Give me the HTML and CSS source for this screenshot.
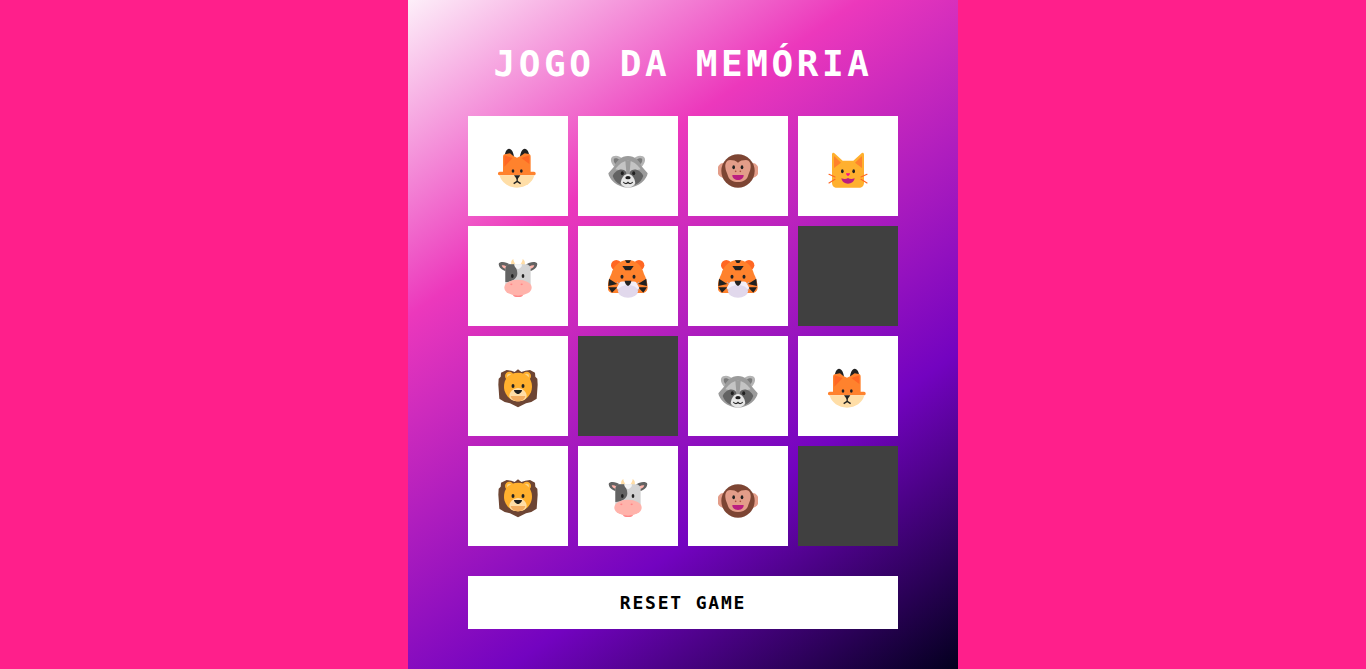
FILE: index.html
```html
<!DOCTYPE html>
<html lang="pt">
<head>
<meta charset="utf-8">
<title>Jogo da Memória</title>
<link rel="stylesheet" href="styles.css">
</head>
<body>
<svg class="defs" xmlns="http://www.w3.org/2000/svg">
  <symbol id="fox" viewBox="0 0 120 120">
    <path fill="#212121" d="M19 32C20 12 26 2 33 2 41 2 47 12 49 32ZM65 32C67 12 73 2 80 2 88 2 94 12 95 32Z"/>
    <path fill="#ff822d" d="M15 76V26C15 20 19 18 24 18L36 16 46 24 57 29 68 24 80 16 92 18C96 18 98 21 98 26V76Z"/>
    <path fill="#ff6723" d="M19 22 44 30 19 56ZM70 30 94 22V48Z"/>
    <rect fill="#ff822d" x="0" y="71" width="113" height="11" rx="5"/>
    <path fill="#ffdea7" d="M5 82H109C104 104 82 119 57 119 32 119 10 104 5 82Z"/>
    <ellipse fill="#212121" cx="45" cy="69" rx="4" ry="5.500"/>
    <ellipse fill="#212121" cx="70" cy="69" rx="4" ry="5.500"/>
    <path fill="#212121" d="M48 82H67L57.500 95Z"/>
    <path fill="none" stroke="#212121" stroke-width="4" d="M57.500 90V100M47 107 57.500 100 68 107"/>
  </symbol>
  <symbol id="raccoon" viewBox="0 0 120 120">
    <path fill="#b4b4b4" d="M10 30C14 20 36 20 44 34L22 60C12 50 6 38 10 30ZM110 30C106 20 84 20 76 34L98 60C108 50 114 38 110 30Z"/>
    <path fill="#7a7a7a" d="M18 32C24 29 30 31 34 35L22 48C18 42 16 37 18 32ZM102 32C96 29 90 31 86 35L98 48C102 42 104 37 102 32Z"/>
    <path fill="#9b9b9b" d="M60 24C80 24 94 38 100 54L119 76C117 92 94 119 60 119 26 119 3 92 1 76L20 54C26 38 40 24 60 24Z"/>
    <path fill="#c4c4c4" d="M60 38C72 38 86 46 98 64L60 72 22 64C34 46 48 38 60 38Z"/>
    <path fill="#9b9b9b" d="M52 38H68L65 72H55Z"/>
    <path fill="#636363" d="M14 84C22 66 44 58 54 72 58 84 50 106 38 110 26 106 18 96 14 84ZM106 84C98 66 76 58 66 72 62 84 70 106 82 110 94 106 102 96 106 84Z"/>
    <ellipse fill="#212121" cx="43" cy="76" rx="4.500" ry="6"/>
    <ellipse fill="#212121" cx="77" cy="76" rx="4.500" ry="6"/>
    <path fill="#e6e6e6" d="M60 78C72 78 80 90 82 106 76 115 68 119 60 119 52 119 44 115 38 106 40 90 48 78 60 78Z"/>
    <ellipse fill="#212121" cx="60" cy="89" rx="8" ry="5"/>
    <path fill="none" stroke="#212121" stroke-width="3.500" d="M46 102C50 108 56 108 60 103 64 108 70 108 74 102"/>
  </symbol>
  <symbol id="monkey" viewBox="0 0 120 120">
    <ellipse fill="#e39d89" cx="15" cy="67" rx="17" ry="22"/>
    <ellipse fill="#e39d89" cx="105" cy="67" rx="17" ry="22"/>
    <circle fill="#7d4533" cx="60" cy="69" r="50"/>
    <path fill="#e39d89" d="M36 36C46 36 54 38 60 44 66 38 74 36 84 36 94 36 99 46 98 58 97 70 92 76 90 84 86 96 74 102 60 102 46 102 34 96 30 84 28 76 23 70 22 58 21 46 26 36 36 36Z"/>
    <ellipse fill="#212121" cx="47" cy="58" rx="4" ry="6"/>
    <ellipse fill="#212121" cx="72" cy="58" rx="4" ry="6"/>
    <circle fill="#a84d3d" cx="53" cy="70" r="2.500"/>
    <circle fill="#a84d3d" cx="67" cy="70" r="2.500"/>
    <path fill="#bb1d80" d="M43 81H77C77 91 69 96 60 96 51 96 43 91 43 81Z"/>
  </symbol>
  <symbol id="cat" viewBox="0 0 120 120">
    <path fill="#ffb02e" d="M12 20C12 14 17 13 21 17L44 38H76L99 17C103 13 108 14 108 20V104C108 113 102 119 93 119H27C18 119 12 113 12 104Z"/>
    <path fill="#ff822d" d="M18 24 39 44 18 60ZM102 24 81 44 102 60Z"/>
    <ellipse fill="#212121" cx="43" cy="70" rx="4" ry="6"/>
    <ellipse fill="#212121" cx="77" cy="70" rx="4" ry="6"/>
    <path fill="#f70a8d" d="M54 76H66C66 80 62 84 60 84 58 84 54 80 54 76Z"/>
    <path fill="#bb1d80" d="M40 91C48 94 54 94 60 90 66 94 72 94 80 91 78 101 70 107 60 107 50 107 42 101 40 91Z"/>
    <path fill="none" stroke="#ff6723" stroke-width="3.500" stroke-linecap="round" d="M3 79 21 87M3 105 21 94M117 79 99 87M117 105 99 94"/>
  </symbol>
  <symbol id="cow" viewBox="0 0 120 120">
    <path fill="#ffdea7" d="M40 22C38 14 40 6 46 3 46 10 50 14 54 22ZM80 22C82 14 80 6 74 3 74 10 70 14 66 22Z"/>
    <path fill="#636363" d="M2 18C4 10 24 10 36 20V38C24 42 4 36 2 18ZM118 18C116 10 96 10 84 20V38C96 42 116 36 118 18Z"/>
    <path fill="#ffb3ab" d="M11 22C18 20 28 24 34 32 24 36 14 32 11 22ZM109 22C102 20 92 24 86 32 96 36 106 32 109 22Z"/>
    <rect fill="#d3d3d3" x="22" y="19" width="76" height="75" rx="14"/>
    <path fill="#636363" d="M36 19H50C52 28 58 34 58 46 58 62 42 72 22 72V33C22 25 28 19 36 19Z"/>
    <path fill="#f4f4f4" d="M48 19H72C72 28 66 32 60 34 54 32 50 28 48 19Z"/>
    <ellipse fill="#212121" cx="43" cy="54" rx="4" ry="6"/>
    <ellipse fill="#212121" cx="75" cy="54" rx="4" ry="6"/>
    <ellipse fill="#ff8687" cx="60" cy="110" rx="15" ry="7"/>
    <ellipse fill="#ffb3ab" cx="60" cy="89" rx="41" ry="24"/>
    <ellipse fill="#ff8687" cx="40" cy="79" rx="3.500" ry="2.500"/>
    <ellipse fill="#ff8687" cx="71" cy="79" rx="3.500" ry="2.500"/>
  </symbol>
  <symbol id="tiger" viewBox="0 0 120 120">
    <circle fill="#ff6723" cx="25" cy="22" r="16"/>
    <circle fill="#ff6723" cx="93" cy="22" r="16"/>
    <path fill="#ff822d" d="M60 6C84 6 102 24 108 48 114 60 119 74 119 88 119 98 113 105 103 105H15C5 105 -1 98 -1 88 -1 74 4 60 10 48 16 24 36 6 60 6Z"/>
    <path fill="#212121" d="M51 7H69L64 15H56ZM43 24H77L68 37H52ZM3 62 28 78 1 84ZM1 88 28 88 12 104ZM115 62 90 78 117 84ZM117 88 90 88 106 104Z"/>
    <ellipse fill="#212121" cx="42" cy="56" rx="4.500" ry="6"/>
    <ellipse fill="#212121" cx="78" cy="56" rx="4.500" ry="6"/>
    <path fill="none" stroke="#b4acbc" stroke-width="3" d="M27 72 40 84M93 72 80 84M27 96 38 94M93 96 82 94"/>
    <path fill="#f3eef8" d="M36 72C44 70 52 70 60 72 68 70 76 70 84 72L94 90C90 96 86 96 80 92H40C34 96 30 96 26 90Z"/>
    <ellipse fill="#e1d8ec" cx="60" cy="100" rx="30" ry="19"/>
    <path fill="#212121" d="M50 68H70C70 76 64 82 60 84 56 82 50 76 50 68Z"/>
  </symbol>
  <symbol id="lion" viewBox="0 0 120 120">
    <path fill="#6d4534" d="M9 14 26 6 40 8 50 12 60 4 70 12 82 8 96 6 111 14 112 26 118 32 119 50 116 92 100 102 84 106 60 118 36 106 20 102 4 92 1 50 2 32 8 26Z"/>
    <circle fill="#ffb02e" cx="34" cy="24" r="13"/>
    <circle fill="#ffb02e" cx="86" cy="24" r="13"/>
    <circle fill="#f9d58a" cx="34" cy="24" r="7"/>
    <circle fill="#f9d58a" cx="86" cy="24" r="7"/>
    <path fill="#ffb02e" d="M60 14C86 14 102 32 102 56 102 78 84 100 60 100 36 100 18 78 18 56 18 32 34 14 60 14Z"/>
    <path fill="#ffdea7" d="M60 60C74 60 86 72 86 84 86 94 74 100 60 100 46 100 34 94 34 84 34 72 46 60 60 60Z"/>
    <path fill="#f3ad61" d="M38 84H82C80 94 70 100 60 100 50 100 40 94 38 84Z"/>
    <ellipse fill="#212121" cx="45" cy="54" rx="4.500" ry="6"/>
    <ellipse fill="#212121" cx="75" cy="54" rx="4.500" ry="6"/>
    <path fill="#212121" d="M48 66H72C72 72 64 78 60 78 56 78 48 72 48 66Z"/>
  </symbol>
</svg>
<main class="container">
  <h1 class="title">JOGO DA MEMÓRIA</h1>
  <section class="board">
    <div class="card"><svg class="emoji" role="img" aria-label="raposa"><use href="#fox"/></svg></div>
    <div class="card"><svg class="emoji" role="img" aria-label="guaxinim"><use href="#raccoon"/></svg></div>
    <div class="card"><svg class="emoji" role="img" aria-label="macaco"><use href="#monkey"/></svg></div>
    <div class="card"><svg class="emoji" role="img" aria-label="gato"><use href="#cat"/></svg></div>
    <div class="card"><svg class="emoji" role="img" aria-label="vaca"><use href="#cow"/></svg></div>
    <div class="card"><svg class="emoji" role="img" aria-label="tigre"><use href="#tiger"/></svg></div>
    <div class="card"><svg class="emoji" role="img" aria-label="tigre"><use href="#tiger"/></svg></div>
    <div class="card back"></div>
    <div class="card"><svg class="emoji" role="img" aria-label="leão"><use href="#lion"/></svg></div>
    <div class="card back"></div>
    <div class="card"><svg class="emoji" role="img" aria-label="guaxinim"><use href="#raccoon"/></svg></div>
    <div class="card"><svg class="emoji" role="img" aria-label="raposa"><use href="#fox"/></svg></div>
    <div class="card"><svg class="emoji" role="img" aria-label="leão"><use href="#lion"/></svg></div>
    <div class="card"><svg class="emoji" role="img" aria-label="vaca"><use href="#cow"/></svg></div>
    <div class="card"><svg class="emoji" role="img" aria-label="macaco"><use href="#monkey"/></svg></div>
    <div class="card back"></div>
  </section>
  <button class="reset">RESET GAME</button>
</main>
</body>
</html>
```
FILE: styles.css
```css
* { box-sizing: border-box; margin: 0; padding: 0; }
html, body { height: 100%; }
body {
  background: #ff1f8b;
  display: flex;
  justify-content: center;
  overflow: hidden;
  font-family: "DejaVu Sans Mono", monospace;
}
.defs { display: none; }
.container {
  width: 550px;
  height: 669px;
  padding: 44px 60px 0;
  display: flex;
  flex-direction: column;
  background: linear-gradient(325deg, #03001e 0%, #7303c0 30%, #ec38bc 70%, #fdeff9 100%);
}
.title {
  color: #fff;
  font-size: 36px;
  font-weight: 700;
  line-height: 40px;
  letter-spacing: 3.6px;
  text-align: center;
  white-space: nowrap;
}
.board {
  display: grid;
  grid-template-columns: repeat(4, 100px);
  grid-auto-rows: 100px;
  gap: 10px;
  margin-top: 32px;
}
.card {
  background: #fff;
  display: flex;
  align-items: center;
  justify-content: center;
  padding-top: 4px;
}
.emoji { width: 40px; height: 40px; display: block; overflow: visible; }
.back { background: #404040; }
.reset {
  margin-top: 30px;
  height: 53px;
  border: 0;
  background: #fff;
  color: #000;
  font-family: inherit;
  font-size: 18px;
  font-weight: 700;
  letter-spacing: 1.8px;
}
```
